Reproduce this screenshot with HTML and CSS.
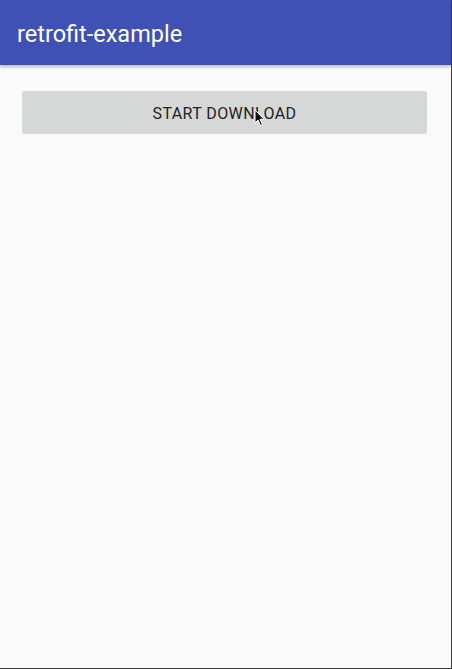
FILE: index.html
```html
<!DOCTYPE html>
<html lang="en">
<head>
  <meta charset="UTF-8">
  <meta name="viewport" content="width=device-width, initial-scale=1.0">
  <title>retrofit-example</title>
  <link rel="stylesheet" href="styles.css">
</head>
<body>

<div class="screen">
  <header class="app-bar">
    <h1>retrofit-example</h1>
  </header>

  <main class="content">
    <button class="download-btn">
      START DOWNLOAD
      <svg class="cursor" width="12" height="18" viewBox="0 0 12 18">
        <path d="M1 1 L1 14 L4 11 L6.5 16.5 L8.5 15.6 L6 10.3 L10 10.3 Z" fill="#111" stroke="#fff" stroke-width="1"/>
      </svg>
    </button>
  </main>
</div>

</body>
</html>
```

FILE: styles.css
```css
html, body {
  margin: 0;
  padding: 0;
}
body {
  font-family: Roboto, "Liberation Sans", sans-serif;
  background-color: #fafafa;
}
.screen {
  width: 451px;
  height: 668px;
  border-right: 1px solid #3a3a3a;
  border-bottom: 1px solid #3a3a3a;
  background-color: #fafafa;
}
.app-bar {
  height: 65px;
  background-color: #3f51b5;
  box-shadow: 0 2px 3px rgba(0, 0, 0, 0.25);
  display: flex;
  align-items: center;
  padding-left: 17px;
}
.app-bar h1 {
  margin: 0;
  padding-top: 2px;
  color: #fff;
  font-size: 23.5px;
  font-weight: normal;
}
.content {
  padding: 26px 24px 0 22px;
}
.download-btn {
  position: relative;
  width: 100%;
  height: 43px;
  border: none;
  border-radius: 2px;
  background-color: #d6d7d7;
  color: #222;
  font-family: Roboto, "Liberation Sans", sans-serif;
  font-size: 16px;
  letter-spacing: 0.4px;
  padding: 1px 0 0 0;
}
.cursor {
  position: absolute;
  left: 232px;
  top: 18px;
}
```
